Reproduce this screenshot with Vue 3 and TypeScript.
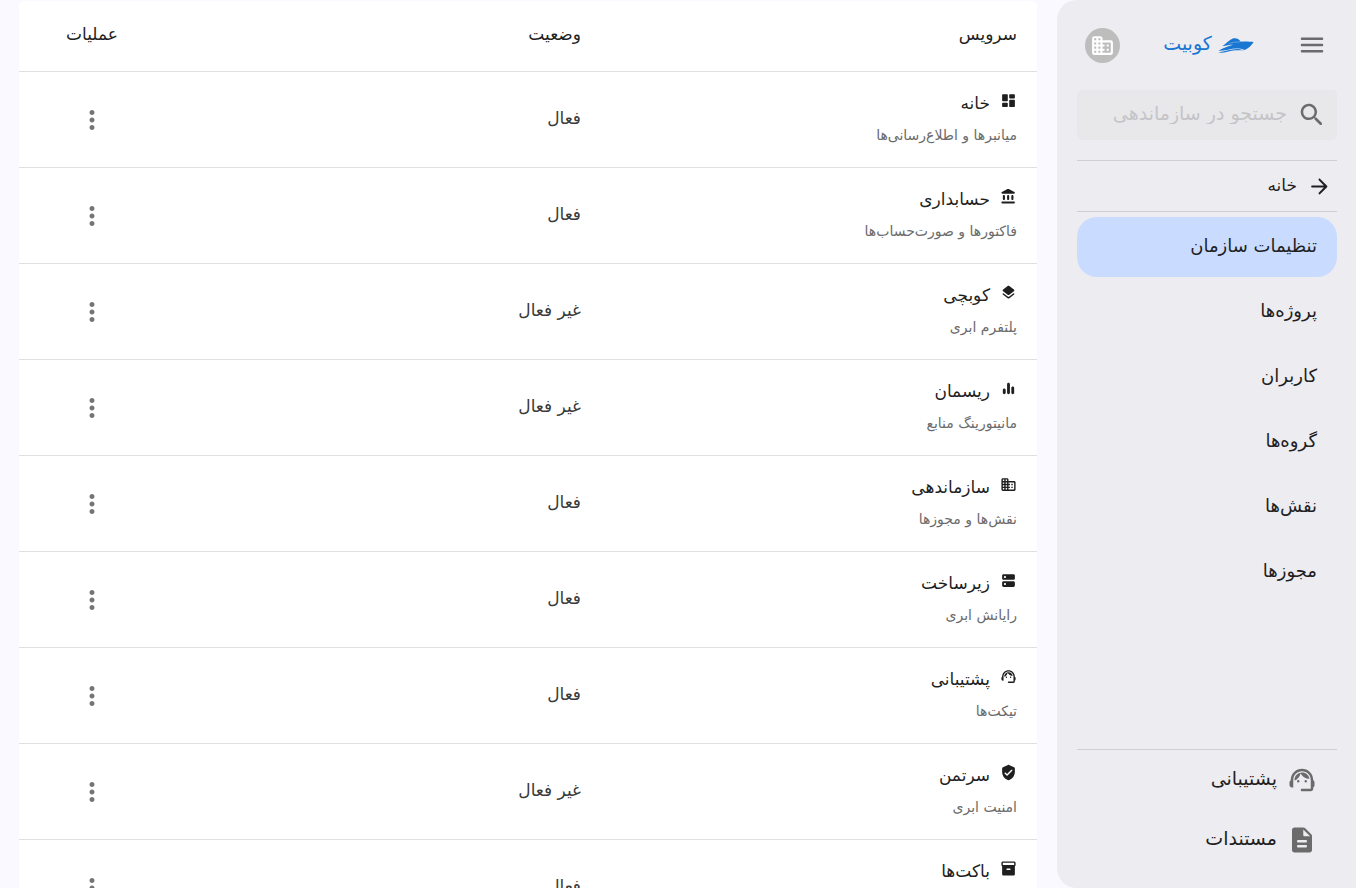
<script setup lang="ts">
interface Service {
  name: string
  description: string
  active: boolean
  icon: string
}

const icons: Record<string, string> = {
  dashboard:
    'M4 13h6c.55 0 1-.45 1-1V4c0-.55-.45-1-1-1H4c-.55 0-1 .45-1 1v8c0 .55.45 1 1 1zm0 8h6c.55 0 1-.45 1-1v-4c0-.55-.45-1-1-1H4c-.55 0-1 .45-1 1v4c0 .55.45 1 1 1zm10 0h6c.55 0 1-.45 1-1v-8c0-.55-.45-1-1-1h-6c-.55 0-1 .45-1 1v8c0 .55.45 1 1 1zM13 4v4c0 .55.45 1 1 1h6c.55 0 1-.45 1-1V4c0-.55-.45-1-1-1h-6c-.55 0-1 .45-1 1z',
  bank:
    'M4 11.5v4c0 .83.67 1.5 1.5 1.5S7 16.33 7 15.5v-4c0-.83-.67-1.5-1.5-1.5S4 10.67 4 11.5zm6 0v4c0 .83.67 1.5 1.5 1.5s1.5-.67 1.5-1.5v-4c0-.83-.67-1.5-1.5-1.5s-1.5.67-1.5 1.5zM3.5 22h16c.83 0 1.5-.67 1.5-1.5s-.67-1.5-1.5-1.5h-16c-.83 0-1.5.67-1.5 1.5S2.67 22 3.5 22zM16 11.5v4c0 .83.67 1.5 1.5 1.5s1.5-.67 1.5-1.5v-4c0-.83-.67-1.5-1.5-1.5s-1.5.67-1.5 1.5zM10.57 1.49l-7.9 4.16c-.41.21-.67.64-.67 1.1C2 7.44 2.56 8 3.25 8h16.51C20.44 8 21 7.44 21 6.75c0-.46-.26-.89-.67-1.1l-7.9-4.16c-.58-.31-1.28-.31-1.86 0z',
  layers:
    'M12.6 18.06c-.36.28-.87.28-1.23 0l-6.15-4.78c-.36-.28-.86-.28-1.22 0-.51.4-.51 1.17 0 1.57l6.76 5.26c.72.56 1.73.56 2.46 0l6.76-5.26c.51-.4.51-1.17 0-1.57l-.01-.01c-.36-.28-.86-.28-1.22 0l-6.15 4.79zm.63-3.02l6.76-5.26c.51-.4.51-1.18 0-1.58l-6.76-5.26c-.72-.56-1.73-.56-2.46 0L4.01 8.21c-.51.4-.51 1.18 0 1.58l6.76 5.26c.72.56 1.74.56 2.46-.01z',
  chart:
    'M6 12c1.1 0 2 .9 2 2v4c0 1.1-.9 2-2 2s-2-.9-2-2v-4c0-1.1.9-2 2-2zM12 4c1.1 0 2 .9 2 2v12c0 1.1-.9 2-2 2s-2-.9-2-2V6c0-1.1.9-2 2-2zM18 9c1.1 0 2 .9 2 2v7c0 1.1-.9 2-2 2s-2-.9-2-2v-7c0-1.1.9-2 2-2z',
  domain:
    'M12 7V5c0-1.1-.9-2-2-2H4c-1.1 0-2 .9-2 2v14c0 1.1.9 2 2 2h16c1.1 0 2-.9 2-2V9c0-1.1-.9-2-2-2h-8zM6 19H4v-2h2v2zm0-4H4v-2h2v2zm0-4H4V9h2v2zm0-4H4V5h2v2zm4 12H8v-2h2v2zm0-4H8v-2h2v2zm0-4H8V9h2v2zm0-4H8V5h2v2zm9 12h-7v-2h2v-2h-2v-2h2v-2h-2V9h7c.55 0 1 .45 1 1v8c0 .55-.45 1-1 1zm-1-8h-2v2h2v-2zm0 4h-2v2h2v-2z',
  server:
    'M19 13H5c-1.1 0-2 .9-2 2v4c0 1.1.9 2 2 2h14c1.1 0 2-.9 2-2v-4c0-1.1-.9-2-2-2zM7 18.5c-.83 0-1.5-.67-1.5-1.5s.67-1.5 1.5-1.5 1.5.67 1.5 1.5-.67 1.5-1.5 1.5zM19 3H5c-1.1 0-2 .9-2 2v4c0 1.1.9 2 2 2h14c1.1 0 2-.9 2-2V5c0-1.1-.9-2-2-2zM7 8.5c-.83 0-1.5-.67-1.5-1.5s.67-1.5 1.5-1.5 1.5.67 1.5 1.5-.67 1.5-1.5 1.5z',
  support:
    'M21 12.22C21 6.73 16.74 3 12 3c-4.69 0-9 3.65-9 9.28-.6.34-1 .98-1 1.72v2c0 1.1.9 2 2 2h1v-6.1c0-3.87 3.13-7 7-7s7 3.13 7 7V19h-7c-.55 0-1 .45-1 1s.45 1 1 1h7c1.1 0 2-.9 2-2v-1.22c.59-.31 1-.92 1-1.64v-2.3c0-.7-.41-1.31-1-1.62zM8 13a1 1 0 1 0 2 0 1 1 0 1 0-2 0zM14 13a1 1 0 1 0 2 0 1 1 0 1 0-2 0zM18 11.03C17.52 8.18 15.04 6 12.05 6c-3.03 0-6.29 2.51-6.03 6.45 2.47-1.01 4.33-3.21 4.86-5.89 1.31 2.63 4 4.44 7.12 4.47z',
  shield:
    'M11.19 1.36l-7 3.11C3.47 4.79 3 5.51 3 6.3V11c0 5.55 3.84 10.74 9 12 5.16-1.26 9-6.45 9-12V6.3c0-.79-.47-1.51-1.19-1.83l-7-3.11c-.51-.23-1.11-.23-1.62 0zm-1.9 14.93L6.7 13.7c-.39-.39-.39-1.02 0-1.41.39-.39 1.02-.39 1.41 0L10 14.17l5.88-5.88c.39-.39 1.02-.39 1.41 0 .39.39.39 1.02 0 1.41l-6.59 6.59c-.38.39-1.02.39-1.41 0z',
  box:
    'M20 2H4c-1 0-2 .9-2 2v3.01c0 .72.43 1.34 1 1.69V20c0 1.1 1.1 2 2 2h14c.9 0 2-.9 2-2V8.7c.57-.35 1-.97 1-1.69V4c0-1.1-1-2-2-2zm-6 12h-4c-.55 0-1-.45-1-1s.45-1 1-1h4c.55 0 1 .45 1 1s-.45 1-1 1zm6-7H4V4h16v3z',
  document:
    'M14.59 2.59c-.38-.38-.89-.59-1.42-.59H6c-1.1 0-2 .9-2 2v16c0 1.1.89 2 1.99 2H18c1.1 0 2-.9 2-2V8.83c0-.53-.21-1.04-.59-1.41l-4.82-4.83zM15 18H9c-.55 0-1-.45-1-1s.45-1 1-1h6c.55 0 1 .45 1 1s-.45 1-1 1zm0-4H9c-.55 0-1-.45-1-1s.45-1 1-1h6c.55 0 1 .45 1 1s-.45 1-1 1zm-2-6V3.5L18.5 9H14c-.55 0-1-.45-1-1z',
  search:
    'M15.5 14h-.79l-.28-.27c1.2-1.4 1.82-3.31 1.48-5.34-.47-2.78-2.79-5-5.59-5.34-4.23-.52-7.79 3.04-7.27 7.27.34 2.8 2.56 5.12 5.34 5.59 2.03.34 3.94-.28 5.34-1.48l.27.28v.79l4.25 4.25c.41.41 1.08.41 1.49 0 .41-.41.41-1.08 0-1.49L15.5 14zm-6 0C7.01 14 5 11.99 5 9.5S7.01 5 9.5 5 14 7.01 14 9.5 11.99 14 9.5 14z',
  menu:
    'M4 18h16c.55 0 1-.45 1-1s-.45-1-1-1H4c-.55 0-1 .45-1 1s.45 1 1 1zm0-5h16c.55 0 1-.45 1-1s-.45-1-1-1H4c-.55 0-1 .45-1 1s.45 1 1 1zM3 7c0 .55.45 1 1 1h16c.55 0 1-.45 1-1s-.45-1-1-1H4c-.55 0-1 .45-1 1z',
  arrow:
    'M5 13h11.17l-4.88 4.88c-.39.39-.39 1.03 0 1.42.39.39 1.02.39 1.41 0l6.59-6.59c.39-.39.39-1.02 0-1.41l-6.58-6.6c-.39-.39-1.02-.39-1.41 0-.39.39-.39 1.02 0 1.41L16.17 11H5c-.55 0-1 .45-1 1s.45 1 1 1z',
  more:
    'M12 8c1.1 0 2-.9 2-2s-.9-2-2-2-2 .9-2 2 .9 2 2 2zm0 2c-1.1 0-2 .9-2 2s.9 2 2 2 2-.9 2-2-.9-2-2-2zm0 6c-1.1 0-2 .9-2 2s.9 2 2 2 2-.9 2-2-.9-2-2-2z',
}

const services: Service[] = [
  { name: 'خانه', description: 'میانبرها و اطلاع‌رسانی‌ها', active: true, icon: 'dashboard' },
  { name: 'حسابداری', description: 'فاکتورها و صورت‌حساب‌ها', active: true, icon: 'bank' },
  { name: 'کوبچی', description: 'پلتفرم ابری', active: false, icon: 'layers' },
  { name: 'ریسمان', description: 'مانیتورینگ منابع', active: false, icon: 'chart' },
  { name: 'سازماندهی', description: 'نقش‌ها و مجوزها', active: true, icon: 'domain' },
  { name: 'زیرساخت', description: 'رایانش ابری', active: true, icon: 'server' },
  { name: 'پشتیبانی', description: 'تیکت‌ها', active: true, icon: 'support' },
  { name: 'سرتمن', description: 'امنیت ابری', active: false, icon: 'shield' },
  { name: 'باکت‌ها', description: 'فضای ابری', active: true, icon: 'box' },
]

const links: string[] = ['تنظیمات سازمان', 'پروژه‌ها', 'کاربران', 'گروه‌ها', 'نقش‌ها', 'مجوزها']
</script>

<template>
  <div class="shell" dir="rtl" lang="fa">
    <aside class="sidebar">
      <header class="top">
        <button class="icon-button" type="button" aria-label="منو">
          <svg class="icon-menu" viewBox="0 0 24 24"><path :d="icons.menu" /></svg>
        </button>
        <a class="brand" href="#">
          <svg class="ship" viewBox="0 0 108 48" aria-hidden="true">
            <path d="M13 28 C25 20 34 8 46 4 C54 2 63 5 68 14 C84 13 96 14 107 15 C100 26 92 34 80 39 C64 32 46 34 30 38 C20 40 10 41 1 41 C14 34 28 28 46 23 C34 23 24 25 13 28 Z" />
            <path d="M1 46 C22 43 42 35 62 36 C68 37 73 39 79 40 C60 39 44 40 28 44 C18 47 9 48 1 46 Z" />
            <path class="ship-line" d="M32 20 C42 16 54 14 66 15" />
          </svg>
          <span>کوبیت</span>
        </a>
        <button class="avatar" type="button" aria-label="سازمان">
          <svg viewBox="0 0 24 24"><path :d="icons.domain" /></svg>
        </button>
      </header>

      <label class="search">
        <svg viewBox="0 0 24 24" aria-hidden="true"><path :d="icons.search" /></svg>
        <input type="text" placeholder="جستجو در سازماندهی" aria-label="جستجو در سازماندهی" />
      </label>

      <a class="home" href="#">
        <svg viewBox="0 0 24 24" aria-hidden="true"><path :d="icons.arrow" /></svg>
        <span>خانه</span>
      </a>

      <nav class="links">
        <a v-for="(link, i) in links" :key="link" href="#" class="link" :class="{ current: i === 0 }">{{ link }}</a>
      </nav>

      <footer class="bottom">
        <a class="help" href="#">
          <svg viewBox="0 0 24 24" aria-hidden="true"><path :d="icons.support" /></svg>
          <span>پشتیبانی</span>
        </a>
        <a class="help" href="#">
          <svg viewBox="0 0 24 24" aria-hidden="true"><path :d="icons.document" /></svg>
          <span>مستندات</span>
        </a>
      </footer>
    </aside>

    <main class="main">
      <table class="services">
        <thead>
          <tr>
            <th scope="col">سرویس</th>
            <th scope="col">وضعیت</th>
            <th scope="col" class="actions">عملیات</th>
          </tr>
        </thead>
        <tbody>
          <tr v-for="service in services" :key="service.name">
            <td>
              <div class="title">
                <svg viewBox="0 0 24 24" aria-hidden="true"><path :d="icons[service.icon]" /></svg>
                <span>{{ service.name }}</span>
              </div>
              <div class="description">{{ service.description }}</div>
            </td>
            <td class="status">{{ service.active ? 'فعال' : 'غیر فعال' }}</td>
            <td class="actions">
              <button class="icon-button" type="button" aria-label="عملیات">
                <svg class="icon-more" viewBox="0 0 24 24"><path :d="icons.more" /></svg>
              </button>
            </td>
          </tr>
        </tbody>
      </table>
    </main>
  </div>
</template>

<style>
body {
  background: #faf9ff;
}
</style>

<style scoped>
.shell {
  display: flex;
  height: 100vh;
  overflow: hidden;
  color: #1f1f1f;
  font-family: "DejaVu Sans", sans-serif;
  font-size: 17px;
}
.shell * {
  box-sizing: border-box;
}
a {
  color: inherit;
  text-decoration: none;
}
svg {
  display: block;
  flex: none;
  fill: currentColor;
}
button {
  display: flex;
  align-items: center;
  justify-content: center;
  padding: 0;
  border: 0;
  cursor: pointer;
}
.sidebar {
  display: flex;
  flex: none;
  flex-direction: column;
  width: 299px;
  padding: 0 19px 0 20px;
  border-radius: 20px 0 0 20px;
  background: #edecf1;
}
.top {
  display: flex;
  align-items: center;
  justify-content: space-between;
  height: 90px;
  padding: 0 10px 0 8px;
}
.icon-button {
  background: none;
  color: #6b6b6f;
}
.icon-menu {
  width: 30px;
  height: 30px;
}
.brand {
  display: flex;
  align-items: center;
  gap: 6px;
  color: #1976d2;
  font-size: 19px;
}
.brand span,
.help span {
  padding-bottom: 4px;
}
.ship {
  width: 36px;
  height: 16px;
}
.ship-line {
  fill: none;
  stroke: #edecf1;
  stroke-width: 1;
}
.avatar {
  width: 35px;
  height: 35px;
  border-radius: 50%;
  background: #bdbdbd;
  color: #fff;
}
.avatar svg {
  width: 25px;
  height: 25px;
}
.search {
  display: flex;
  align-items: center;
  gap: 10px;
  height: 50px;
  padding: 0 10px;
  border-radius: 5px;
  background: #e8e8ea;
  color: #6b6b6b;
}
.search svg {
  width: 30px;
  height: 30px;
}
.search input {
  flex: 1;
  min-width: 0;
  height: 50px;
  padding: 0 0 4px;
  border: 0;
  outline: 0;
  background: none;
  color: #1f1f1f;
  font: inherit;
  font-size: 19px;
  line-height: 46px;
}
.search input::placeholder {
  color: #c4c4c8;
  line-height: 46px;
  opacity: 1;
}
.home {
  display: flex;
  align-items: center;
  gap: 10px;
  height: 52px;
  margin-top: 20px;
  padding: 0 5px;
  border: solid #cfcfd4;
  border-width: 1px 0;
}
.home span {
  padding-bottom: 2px;
}
.home svg {
  width: 25px;
  height: 25px;
}
.links {
  display: flex;
  flex: 1;
  flex-direction: column;
  gap: 5px;
  padding-top: 5px;
}
.link {
  display: flex;
  align-items: center;
  height: 60px;
  padding: 0 20px 4px;
  border-radius: 20px;
  font-size: 18px;
}
.current {
  background: #c9dbff;
}
.bottom {
  height: 139px;
  border-top: 1px solid #cfcfd4;
}
.help {
  display: flex;
  align-items: center;
  gap: 10px;
  height: 60px;
  padding: 0 20px;
  font-size: 19px;
}
.help svg {
  width: 30px;
  height: 30px;
  color: #6b6b6b;
}
.main {
  flex: 1;
  min-width: 0;
  padding: 1px 20px 0 19px;
}
.services {
  width: 100%;
  table-layout: fixed;
  border-spacing: 0;
  border-radius: 5px 5px 0 0;
  background: #fff;
}
th,
td {
  padding: 0 20px;
  border-bottom: 1px solid #e0e0e0;
  text-align: right;
}
th {
  height: 71px;
  padding-bottom: 4px;
  font-weight: 400;
}
td {
  height: 96px;
}
.actions {
  width: 146px;
  text-align: center;
}
.actions .icon-button {
  margin: 0 auto;
  color: #757575;
}
.icon-more {
  width: 30px;
  height: 30px;
}
.title {
  display: flex;
  gap: 10px;
  height: 32px;
  line-height: 30px;
}
.title svg {
  width: 17px;
  height: 17px;
  margin-top: 4px;
}
.description {
  height: 32px;
  color: #6b6b6b;
  font-size: 14px;
  line-height: 30px;
}
.status {
  padding-bottom: 4px;
  color: #3a3a3a;
}
</style>
